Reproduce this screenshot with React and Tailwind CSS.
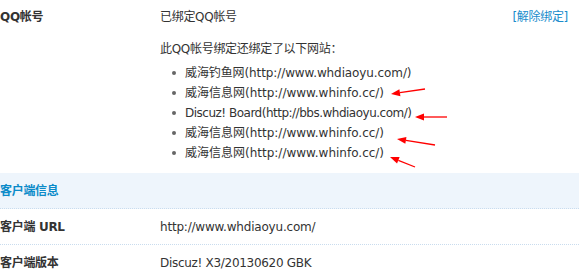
import React from "react";

// tracking per line keeps the text ends where the reference has them
const sites = [
  { text: "威海钓鱼网(http://www.whdiaoyu.com/)", tr: "tracking-[-0.1px]" },
  { text: "威海信息网(http://www.whinfo.cc/)", tr: "tracking-[0px]" },
  { text: "Discuz! Board(http://bbs.whdiaoyu.com/)", tr: "tracking-[-0.5px]" },
  { text: "威海信息网(http://www.whinfo.cc/)", tr: "tracking-[0px]" },
  { text: "威海信息网(http://www.whinfo.cc/)", tr: "tracking-[0px]" },
];

// red annotation arrows drawn over the list: [tipX, tipY, tailX, tailY]
const arrows = [
  [391, 94, 425, 89],
  [415, 117, 447, 117],
  [397, 139, 435, 145],
  [390, 157, 415, 167],
];

function Arrow({ x1, y1, x2, y2 }) {
  const a = Math.atan2(y2 - y1, x2 - x1);
  const len = 9;
  const w = 3.5;
  const bx = x1 + Math.cos(a) * len;
  const by = y1 + Math.sin(a) * len;
  const px = -Math.sin(a) * w;
  const py = Math.cos(a) * w;
  return (
    <g>
      <line x1={bx} y1={by} x2={x2} y2={y2} stroke="#ff0000" strokeWidth="1.3" />
      <polygon points={`${x1},${y1} ${bx + px},${by + py} ${bx - px},${by - py}`} fill="#ff0000" />
    </g>
  );
}

export default function App() {
  return (
    <div className="relative w-[579px] h-[277px] overflow-hidden bg-white text-[12px] tracking-[-0.3px] text-[#333] font-['DejaVu_Sans','Noto_Sans_CJK_SC',sans-serif]">
      {/* QQ account row */}
      <div className="flex pt-[7px] pb-[10px]">
        <div className="w-[160px] h-[20px] leading-[20px] font-bold">QQ帐号</div>
        <div className="flex-1">
          <div className="flex justify-between h-[20px] leading-[20px] pr-[11px]">
            <span>已绑定QQ帐号</span>
            <a className="text-[#1a8ccc] cursor-pointer">[解除绑定]</a>
          </div>
          <p className="mt-[12px] h-[20px] leading-[20px]">此QQ帐号绑定还绑定了以下网站：</p>
          <ul className="mt-[4px]">
            {sites.map((s, i) => (
              <li key={i} className="flex items-center h-[20px] leading-[20px] pl-[12px]">
                <span className="w-[4px] h-[4px] rounded-full bg-[#666] mr-[9px]"></span>
                <span className={s.tr}>{s.text}</span>
              </li>
            ))}
          </ul>
        </div>
      </div>

      {/* client info header */}
      <div className="h-[36px] flex items-center bg-[#eef5fc] border-b border-dotted border-[#c9dcee] font-bold text-[#0b8bc9]">
        客户端信息
      </div>

      <div className="flex items-center h-[36px] border-b border-dotted border-[#c9dcee]">
        <div className="w-[160px] font-bold">客户端 URL</div>
        <div className="tracking-[-0.2px]">http://www.whdiaoyu.com/</div>
      </div>

      <div className="flex items-center h-[36px]">
        <div className="w-[160px] font-bold">客户端版本</div>
        <div>Discuz! X3/20130620 GBK</div>
      </div>

      <svg className="absolute inset-0 pointer-events-none" width="579" height="277">
        {arrows.map(([x1, y1, x2, y2], i) => (
          <Arrow key={i} x1={x1} y1={y1} x2={x2} y2={y2} />
        ))}
      </svg>
    </div>
  );
}
